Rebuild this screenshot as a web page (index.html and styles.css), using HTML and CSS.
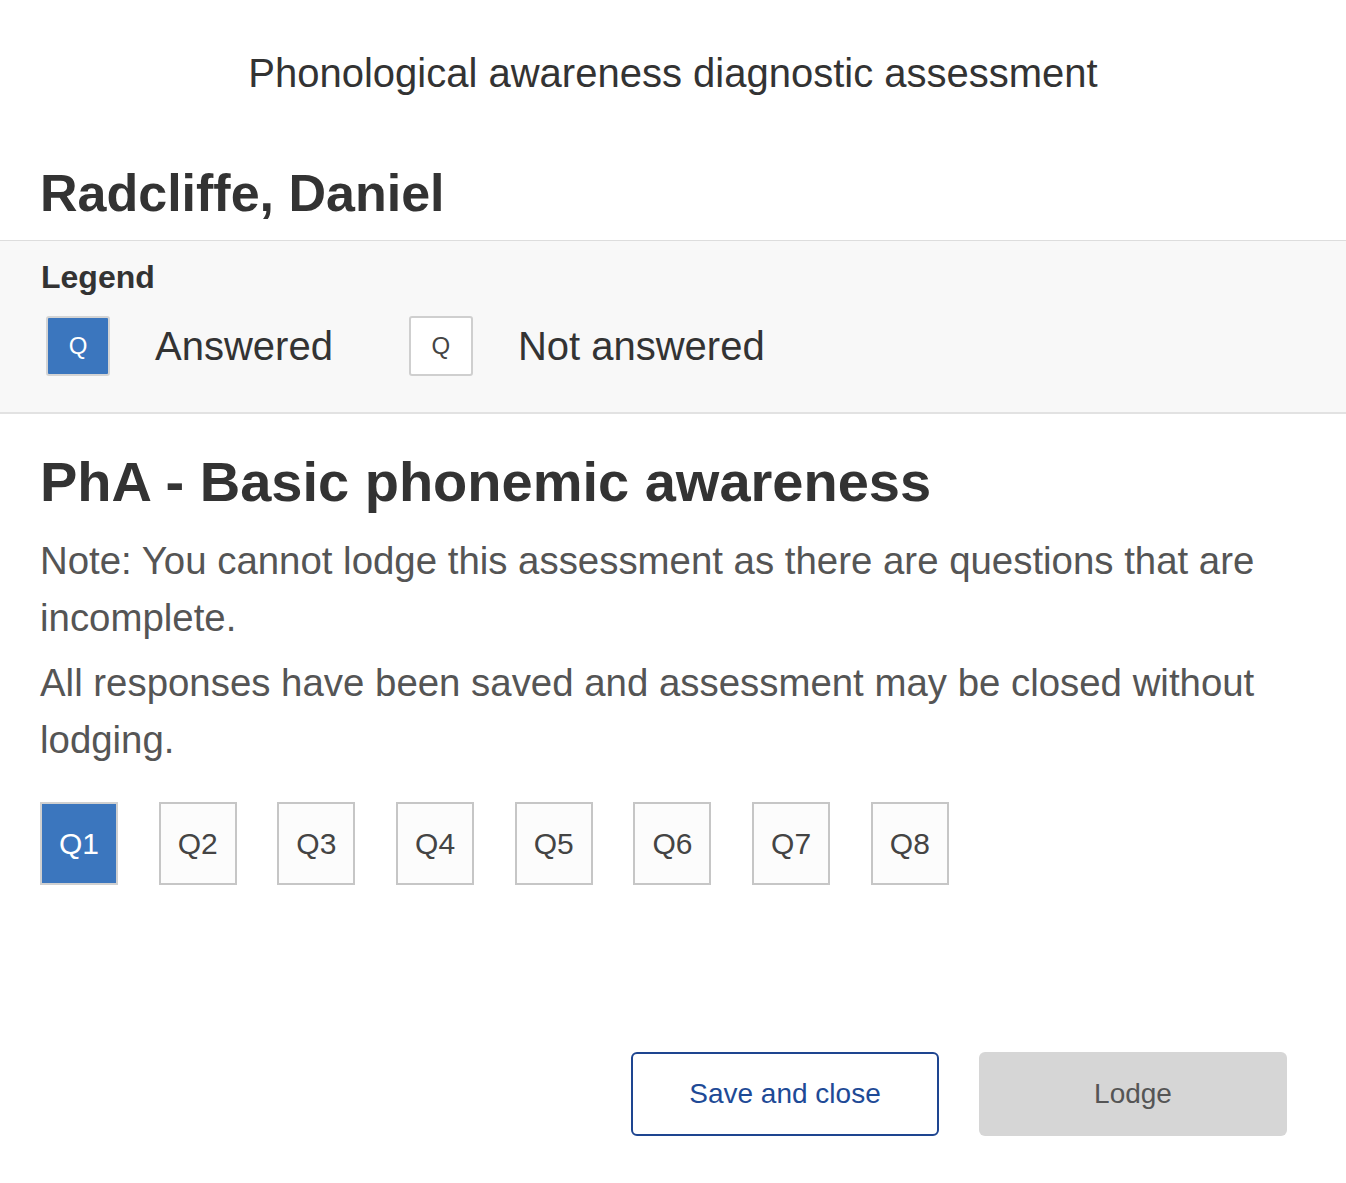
FILE: index.html
```html
<!DOCTYPE html>
<html lang="en">
<head>
<meta charset="utf-8">
<title>Phonological awareness diagnostic assessment</title>
<link rel="stylesheet" href="styles.css">
</head>
<body>
<div class="page">
  <header class="top">
    <h1 class="title">Phonological awareness diagnostic assessment</h1>
    <h2 class="student">Radcliffe, Daniel</h2>
  </header>
  <section class="legend">
    <div class="legend-label">Legend</div>
    <div class="legend-items">
      <div class="legend-item">
        <span class="lbox lbox-answered">Q</span>
        <span class="legend-text">Answered</span>
      </div>
      <div class="legend-item">
        <span class="lbox">Q</span>
        <span class="legend-text">Not answered</span>
      </div>
    </div>
  </section>
  <main class="content">
    <h2 class="section-title">PhA - Basic phonemic awareness</h2>
    <p class="note">Note: You cannot lodge this assessment as there are questions that are incomplete.</p>
    <p class="note">All responses have been saved and assessment may be closed without lodging.</p>
    <div class="questions">
      <button class="qbtn qbtn-answered">Q1</button>
      <button class="qbtn">Q2</button>
      <button class="qbtn">Q3</button>
      <button class="qbtn">Q4</button>
      <button class="qbtn">Q5</button>
      <button class="qbtn">Q6</button>
      <button class="qbtn">Q7</button>
      <button class="qbtn">Q8</button>
    </div>
  </main>
  <footer class="actions">
    <button class="btn btn-outline">Save and close</button>
    <button class="btn btn-disabled">Lodge</button>
  </footer>
</div>
</body>
</html>
```

FILE: styles.css
```css
* { box-sizing: border-box; }
html, body { margin: 0; padding: 0; background: #fff; }
body {
  font-family: "Liberation Sans", Arial, sans-serif;
  color: #333;
}
.page { width: 1346px; }
.top { padding: 50px 40px 17px; }
.title {
  margin: 0;
  text-align: center;
  font-size: 40px;
  font-weight: normal;
  line-height: 46px;
  color: #333;
}
.student {
  margin: 67px 0 0;
  font-size: 52px;
  font-weight: bold;
  line-height: 60px;
  color: #333;
}
.legend {
  background: #f8f8f8;
  border-top: 1px solid #ddd;
  border-bottom: 2px solid #e2e2e2;
  padding: 17px 40px 36px;
}
.legend-label {
  font-size: 32px;
  font-weight: bold;
  line-height: 38px;
  color: #333;
  padding-left: 1px;
}
.legend-items {
  display: flex;
  align-items: center;
  gap: 76px;
  margin-top: 20px;
  padding-left: 6px;
}
.legend-item { display: flex; align-items: center; gap: 45px; }
.lbox {
  display: flex;
  align-items: center;
  justify-content: center;
  width: 64px;
  height: 60px;
  border: 2px solid #cfcfcf;
  border-radius: 3px;
  background: #fff;
  font-size: 24px;
  color: #444;
}
.lbox-answered { background: #3b76be; color: #fff; border-color: #d4d4d4; }
.legend-text { font-size: 40px; line-height: 46px; color: #333; }
.content { padding: 36px 40px 0; }
.section-title {
  margin: 0;
  font-size: 56px;
  font-weight: bold;
  line-height: 64px;
  color: #333;
}
.note {
  margin: 8px 0 0;
  font-size: 38.4px;
  line-height: 57px;
  color: #555;
  padding-right: 40px;
}
.section-title + .note { margin-top: 18px; }
.questions {
  display: flex;
  gap: 40.7px;
  margin-top: 34px;
}
.qbtn {
  width: 78px;
  height: 83px;
  padding: 0;
  border: 2px solid #c6c6c6;
  background: #fcfcfc;
  font-family: "Liberation Sans", Arial, sans-serif;
  font-size: 30px;
  color: #444;
}
.qbtn-answered { background: #3b76be; color: #fff; border-color: #d0d0d0; }
.actions {
  display: flex;
  justify-content: flex-end;
  gap: 40px;
  padding: 167px 59px 0 0;
}
.btn {
  width: 308px;
  height: 84px;
  border-radius: 6px;
  font-family: "Liberation Sans", Arial, sans-serif;
  font-size: 28px;
}
.btn-outline {
  background: #fff;
  border: 2px solid #1e4590;
  color: #1e4a96;
}
.btn-disabled {
  background: #d6d6d6;
  border: none;
  color: #555;
}
```
